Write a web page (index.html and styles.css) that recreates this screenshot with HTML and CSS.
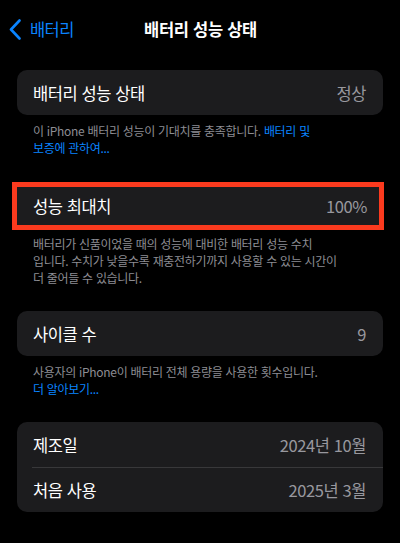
FILE: index.html
```html
<!DOCTYPE html>
<html lang="ko">
<head>
<meta charset="utf-8">
<link rel="stylesheet" href="styles.css">
</head>
<body>
<div class="screen">
  <header class="nav">
    <a class="back">
      <svg class="chev" width="13" height="21" viewBox="0 0 13 21"><polyline points="10.5,1.5 2,10.5 10.5,19.5" fill="none" stroke="#0a84ff" stroke-width="2.6" stroke-linecap="round" stroke-linejoin="round"/></svg>
      <span>배터리</span>
    </a>
    <h1 class="title">배터리 성능 상태</h1>
    <span></span>
  </header>

  <section class="group">
    <div class="card">
      <div class="row"><span class="label">배터리 성능 상태</span><span class="value">정상</span></div>
    </div>
    <p class="foot">이 iPhone 배터리 성능이 기대치를 충족합니다. <a class="link">배터리 및<br>보증에 관하여...</a></p>
  </section>

  <section class="group">
    <div class="card card-hl">
      <div class="row row-hl"><span class="label">성능 최대치</span><span class="value">100%</span></div>
    </div>
    <p class="foot">배터리가 신품이었을 때의 성능에 대비한 배터리 성능 수치<br>입니다. 수치가 낮을수록 재충전하기까지 사용할 수 있는 시간이<br>더 줄어들 수 있습니다.</p>
  </section>

  <section class="group">
    <div class="card">
      <div class="row"><span class="label">사이클 수</span><span class="value">9</span></div>
    </div>
    <p class="foot">사용자의 iPhone이 배터리 전체 용량을 사용한 횟수입니다.<br><a class="link">더 알아보기...</a></p>
  </section>

  <section class="group">
    <div class="card">
      <div class="row"><span class="label">제조일</span><span class="value">2024년 10월</span></div>
      <div class="row"><span class="label">처음 사용</span><span class="value">2025년 3월</span></div>
    </div>
  </section>
</div>
</body>
</html>
```

FILE: styles.css
```css
* { box-sizing: border-box; }
html, body {
  margin: 0;
  padding: 0;
  background: #000;
}
body {
  font-family: "Noto Sans CJK KR", "Noto Sans", sans-serif;
  color: #fff;
  width: 400px;
  height: 543px;
  overflow: hidden;
}
.screen {
  display: flex;
  flex-direction: column;
}
.nav {
  height: 58px;
  display: grid;
  grid-template-columns: 1fr auto 1fr;
  align-items: center;
  padding: 0 8px 0 9px;
}
.back {
  display: flex;
  align-items: center;
  gap: 8px;
  color: #0a84ff;
  font-size: 16.5px;
  letter-spacing: -0.6px;
}
.chev { display: block; }
.title {
  margin: 0;
  font-size: 16.5px;
  font-weight: 600;
  letter-spacing: -0.3px;
}
.group {
  margin: 12px 0 0;
}
.group + .group { margin-top: 25px; }
.card {
  margin: 0 17px;
  background: #1c1c1e;
  border-radius: 10px;
  overflow: hidden;
}
.row {
  height: 45px;
  display: flex;
  align-items: center;
  justify-content: space-between;
  padding: 0 17px 0 16px;
  font-size: 16.5px;
  letter-spacing: -0.4px;
  position: relative;
}
.row + .row::before {
  content: "";
  position: absolute;
  top: 0;
  left: 15px;
  right: 0;
  border-top: 1px solid #38383a;
}
.label { color: #fff; }
.value { color: #98989e; }
.card-hl {
  margin: 0 16px 0 12px;
  border: 5px solid #fb3a1e;
  border-radius: 0;
  background: #1c1c1e;
}
.row-hl {
  height: 38px;
  padding: 0 12px 0 16px;
}
.foot {
  margin: 0;
  padding: 7px 17px 0 33px;
  font-size: 12px;
  line-height: 17px;
  color: #8d8d93;
  letter-spacing: -0.3px;
}
.link { color: #0a84ff; }
.group:nth-of-type(2) { margin-top: 26px; }
.group:nth-of-type(2) .foot { padding-top: 5px; }
```
